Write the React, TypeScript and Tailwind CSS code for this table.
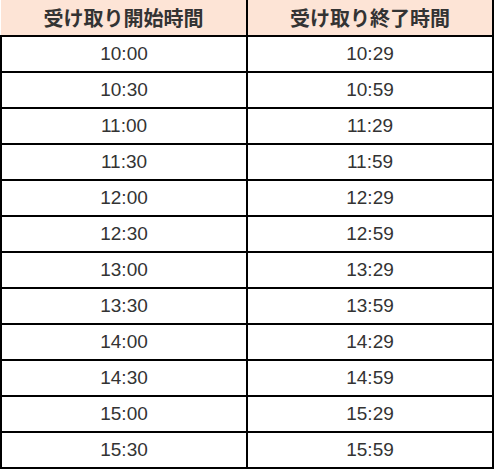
import React from 'react';

const rows: [string, string][] = [
  ['10:00', '10:29'],
  ['10:30', '10:59'],
  ['11:00', '11:29'],
  ['11:30', '11:59'],
  ['12:00', '12:29'],
  ['12:30', '12:59'],
  ['13:00', '13:29'],
  ['13:30', '13:59'],
  ['14:00', '14:29'],
  ['14:30', '14:59'],
  ['15:00', '15:29'],
  ['15:30', '15:59'],
];

export default function App() {
  return (
    <div className="w-[495px] h-[470px] bg-white">
      <table
        className="w-[494px] border-collapse text-[#333] table-fixed"
        style={{ fontFamily: '"Liberation Sans", Arial, "Noto Sans CJK JP", sans-serif' }}
      >
        <thead>
          <tr className="h-[36px] bg-[#fde4d6]">
            <th className="border-b-2 border-r-2 border-black text-[20px] font-bold pt-0.5">
              受け取り開始時間
            </th>
            <th className="border-b-2 border-r-2 border-black text-[20px] font-bold pt-0.5">
              受け取り終了時間
            </th>
          </tr>
        </thead>
        <tbody>
          {rows.map(([a, b], i) => (
            <tr key={i} className="h-[36px]">
              <td className="border-2 border-t-0 border-black text-center text-[19px] pt-px">{a}</td>
              <td className="border-2 border-t-0 border-l-0 border-black text-center text-[19px] pt-px">{b}</td>
            </tr>
          ))}
        </tbody>
      </table>
    </div>
  );
}
